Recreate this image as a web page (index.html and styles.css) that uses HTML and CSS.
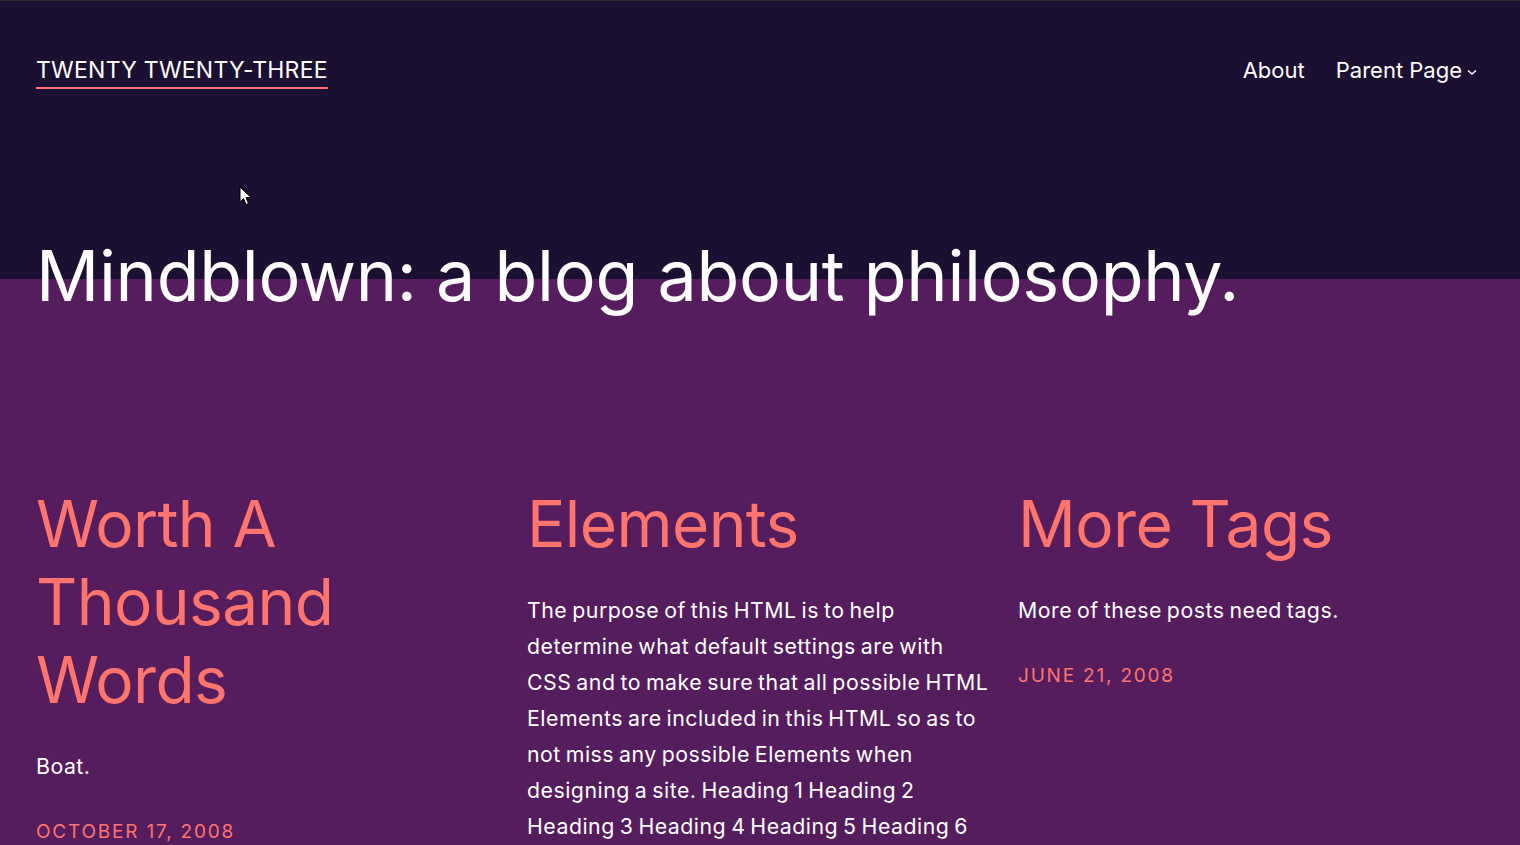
FILE: index.html
```html
<!DOCTYPE html>
<html lang="en">
<head>
<meta charset="utf-8">
<title>Twenty Twenty-Three</title>
<link rel="stylesheet" href="styles.css">
</head>
<body>
<div class="top">
  <header class="site-header">
    <a class="site-title" href="#">Twenty Twenty-Three</a>
    <nav class="nav">
      <a href="#">About</a>
      <a href="#" class="has-sub">Parent Page
        <svg class="chev" width="12" height="12" viewBox="0 0 12 12" aria-hidden="true"><path d="M2 4.5 L6 8 L10 4.5" fill="none" stroke="#fff" stroke-width="1.5"/></svg>
      </a>
    </nav>
  </header>
  <h1 class="hero-title">Mindblown: a blog about philosophy.</h1>
</div>
<main class="posts">
  <article class="post">
    <h2 class="post-title">Worth A Thousand Words</h2>
    <p class="excerpt">Boat.</p>
    <div class="date">October 17, 2008</div>
  </article>
  <article class="post">
    <h2 class="post-title">Elements</h2>
    <p class="excerpt">The purpose of this HTML is to help determine what default settings are with CSS and to make sure that all possible HTML Elements are included in this HTML so as to not miss any possible Elements when designing a site. Heading 1 Heading 2 Heading 3 Heading 4 Heading 5 Heading 6</p>
  </article>
  <article class="post">
    <h2 class="post-title">More Tags</h2>
    <p class="excerpt">More of these posts need tags.</p>
    <div class="date">June 21, 2008</div>
  </article>
</main>
<svg class="cursor" width="14" height="22" viewBox="0 0 14 22" aria-hidden="true"><path d="M1 1 L1 16 L4.5 12.5 L7 18.5 L9.5 17.5 L7 11.5 L12 11.5 Z" fill="#fff" stroke="#000" stroke-width="1"/></svg>
</body>
</html>
```
FILE: styles.css
```css
html, body {
  margin: 0;
  padding: 0;
}
body {
  background: #551C5E;
  color: #fff;
  font-family: Inter, "Noto Sans", sans-serif;
  overflow: hidden;
  height: 845px;
  position: relative;
}
a {
  color: inherit;
  text-decoration: none;
}
.top {
  background: linear-gradient(to bottom, #1B1031 0, #1B1031 278px, #551C5E 278px);
  border-top: 1px solid #2b2b30;
  padding: 56px 42px 167px 36px;
}
.site-header {
  display: flex;
  justify-content: space-between;
  align-items: baseline;
}
.site-title {
  font-size: 23px;
  line-height: 1.2;
  text-transform: uppercase;
  letter-spacing: 0.25px;
  text-decoration: underline;
  text-decoration-color: #FF746D;
  text-decoration-thickness: 2px;
  text-underline-offset: 9px;
}
.nav {
  display: flex;
  gap: 31px;
  font-size: 22px;
  line-height: 1.2;
}
.nav .has-sub {
  display: inline-flex;
  align-items: center;
  gap: 4px;
}
.chev {
  margin-top: 4px;
}
.hero-title {
  margin: 149px 0 0;
  font-size: 70px;
  line-height: 84px;
  font-weight: 400;
  letter-spacing: -0.3px;
}
.posts {
  display: grid;
  grid-template-columns: repeat(3, 1fr);
  gap: 25px;
  padding: 0 36px;
}
.post-title {
  margin: 0;
  font-size: 64px;
  line-height: 78px;
  font-weight: 400;
  color: #FF746D;
  letter-spacing: -0.6px;
}
.excerpt {
  margin: 29px 0 0;
  max-width: 464px;
  font-size: 21.3px;
  line-height: 36px;
  letter-spacing: 0.5px;
  word-spacing: -1.5px;
}
.date {
  margin-top: 35px;
  font-size: 19px;
  line-height: 26.6px;
  text-transform: uppercase;
  letter-spacing: 1.8px;
  color: #FF746D;
}
.cursor {
  position: absolute;
  left: 239px;
  top: 186px;
}
```
